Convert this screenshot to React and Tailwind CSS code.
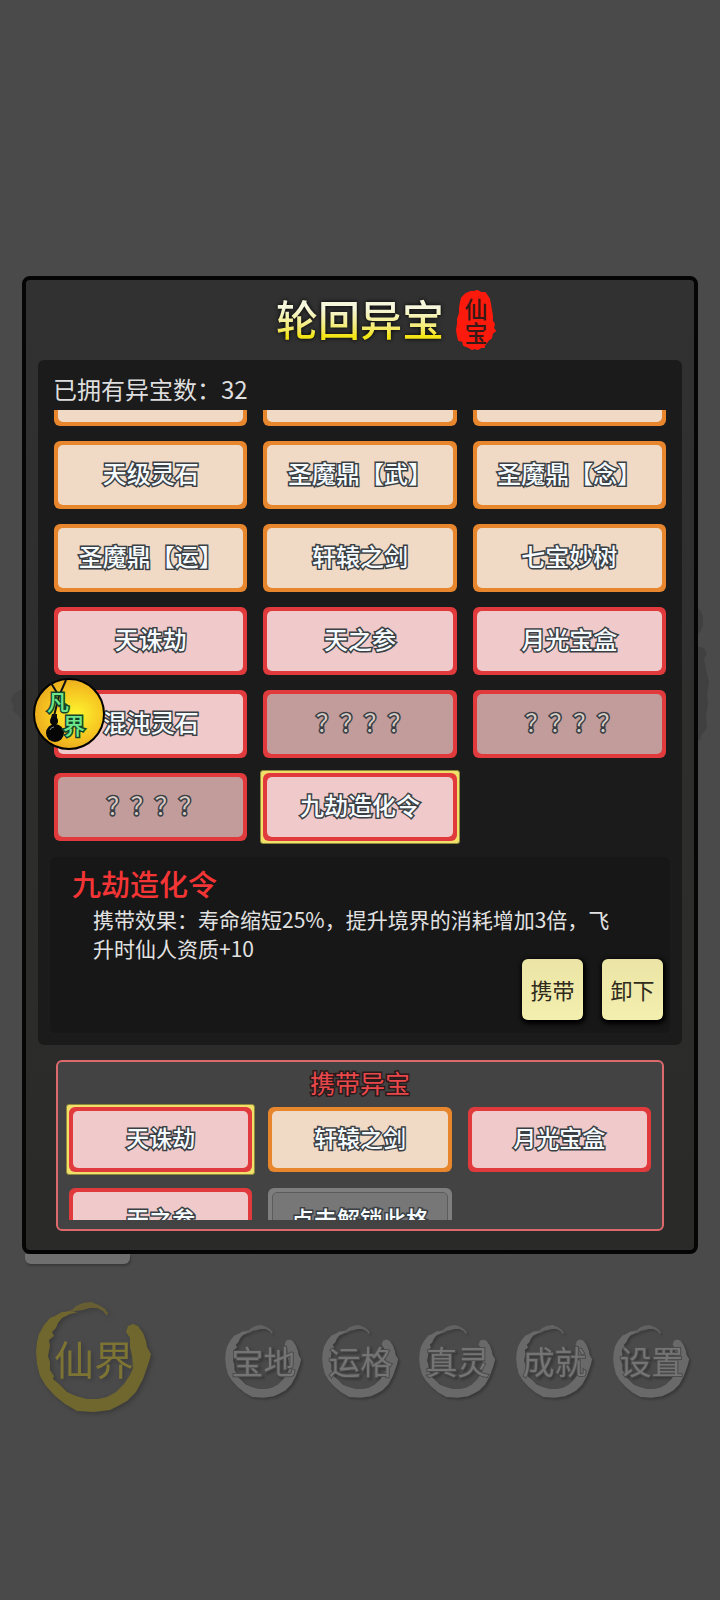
import React, { useState } from 'react'
import clsx from 'clsx'

// the first row is scrolled out of view, only its lower edge shows
const TREASURES = [
  { name: '', tone: 'orange' },
  { name: '', tone: 'orange' },
  { name: '', tone: 'orange' },
  { name: '天级灵石', tone: 'orange' },
  { name: '圣魔鼎【武】', tone: 'orange' },
  { name: '圣魔鼎【念】', tone: 'orange' },
  { name: '圣魔鼎【运】', tone: 'orange' },
  { name: '轩辕之剑', tone: 'orange' },
  { name: '七宝妙树', tone: 'orange' },
  { name: '天诛劫', tone: 'red' },
  { name: '天之参', tone: 'red' },
  { name: '月光宝盒', tone: 'red' },
  { name: '混沌灵石', tone: 'red' },
  { name: '？？？？', tone: 'locked' },
  { name: '？？？？', tone: 'locked' },
  { name: '？？？？', tone: 'locked' },
  { name: '九劫造化令', tone: 'red' },
]

const CARRIED = [
  { name: '天诛劫', tone: 'red' },
  { name: '轩辕之剑', tone: 'orange' },
  { name: '月光宝盒', tone: 'red' },
  { name: '天之参', tone: 'red' },
  { name: '点击解锁此格', tone: 'empty' },
]

const FRAME = {
  orange: 'bg-[#e8862d]',
  red: 'bg-[#e03a3c]',
  locked: 'bg-[#e03a3c]',
  empty: 'bg-[#7e7e7e]',
}

const FILL = {
  orange: 'bg-[#f0d9c5] font-medium text-[#f6fbff]',
  red: 'bg-[#f0caca] font-medium text-[#f6fbff]',
  locked: 'bg-[#c19c9a] pl-2 font-normal text-[#d9cdc8]',
  empty: 'bg-[#777777] border border-[#5c5c5c] font-medium text-[#f6fbff]',
}

function Tile({ item, selected, small, onClick }) {
  return (
    <div className="relative">
      {selected && <span className="absolute -inset-[3px] rounded-[3px] border border-[#8f8a3c] bg-[#f0e06a]" />}
      <button
        onClick={onClick}
        className={clsx('relative block w-full rounded-md p-1', small ? 'h-[65px]' : 'h-[68px]', FRAME[item.tone])}
      >
        <span
          className={clsx(
            'flex h-full items-center justify-center rounded-[5px] pb-1 whitespace-nowrap',
            '[-webkit-text-stroke:3px_#3a3f44] [paint-order:stroke_fill]',
            small ? 'text-[23px]' : 'text-2xl',
            FILL[item.tone]
          )}
        >
          {item.name}
        </span>
      </button>
    </div>
  )
}

function BrushRing({ className }) {
  return (
    <svg viewBox="0 0 116 112" className={className} fill="currentColor" aria-hidden="true">
      <path d="M92 24 L97 22 L102 24 L107 31 L110 39 L111 45 L115 52 L113 60 L107 77 L100 90 L91 99 L82 104 L74 108 L58 110 L41 109 L29 102 L19 94 L10 84 L4 74 L1 62 L0 50 L1 40 L3 32 L8 23 L14 16 L19 14 L26 10 L33 10 L42 10 L34 12 L26 16 L22 21 L20 26 L16 30 L18 34 L13 38 L14 44 L12 54 L14 60 L14 68 L18 74 L17 77 L23 82 L31 90 L40 94 L51 97 L62 97 L71 95 L80 90 L88 82 L94 73 L97 66 L96 54 L94 45 L94 36 L90 30 Z" />
      <path d="M24 11 L36 8 L40 4 L47 1 L55 0 L63 3 L69 7 L72 11 L71 14 L67 9 L61 6 L54 6 L47 8 L40 9 L30 12 Z" opacity="0.8" />
    </svg>
  )
}

function Seal() {
  return (
    <span className="absolute top-1/2 left-full ml-3 flex h-[60px] w-10 -translate-y-1/2 flex-col items-center justify-center">
      <svg viewBox="0 0 40 60" className="absolute inset-0 h-full w-full" aria-hidden="true">
        <path
          fill="#fb1a0c"
          stroke="#fb1a0c"
          strokeWidth="2"
          strokeLinejoin="round"
          d="M10 4 L15 2 L18 2 L21 1 L25 3 L29 3 L31 6 L33 9 L34 14 L35 20 L36 26 L36 31 L38 34 L37 38 L39 41 L36 43 L35 48 L32 50 L30 53 L28 55 L28 57 L25 57 L22 59 L19 58 L16 59 L13 57 L8 55 L7 51 L3 50 L2 46 L1 40 L2 34 L2 29 L4 23 L4 18 L5 12 L6 8 Z"
        />
      </svg>
      <span className="relative text-[23px] leading-6 font-medium text-[#351a18]">仙</span>
      <span className="relative text-[23px] leading-6 font-medium text-[#351a18]">宝</span>
    </span>
  )
}

function RealmBadge() {
  return (
    <button className="absolute top-[398px] left-[7px] h-[72px] w-[72px] rounded-full border-2 border-black bg-radial-[at_60%_50%] from-[#fdf02e] from-5% via-[#f6c421] via-50% to-[#df921a] text-[22px] font-medium text-[#6fe58c]">
      <svg viewBox="0 0 68 68" className="absolute inset-0 h-full w-full" aria-hidden="true">
        <path d="M16 3 L24 16 M31 0 L24 16 L19 36" stroke="#111" strokeWidth="2" fill="none" />
        <path d="M17 34 h5 v4 h-1 v8 h-4 v-8 h-1 Z" fill="#111" />
        <circle cx="19" cy="41" r="4" fill="#060606" />
        <circle cx="20" cy="53" r="9" fill="#060606" />
        <path d="M15 50 q1 -3 4 -3" stroke="#888" strokeWidth="1" fill="none" />
      </svg>
      <span className="absolute top-2 left-3 leading-6 [-webkit-text-stroke:3px_#12452a] [paint-order:stroke_fill]">凡</span>
      <span className="absolute top-8 left-7 leading-6 [-webkit-text-stroke:3px_#12452a] [paint-order:stroke_fill]">界</span>
    </button>
  )
}

export default function App() {
  const [picked, setPicked] = useState(16)
  const [slot, setSlot] = useState(0)

  return (
    <div className="relative min-h-screen overflow-hidden bg-[#4a4a4a] pt-[276px] font-['Noto_Sans_CJK_SC',sans-serif]">
      {/* ink smudges showing at both sides of the dialog */}
      <svg viewBox="0 0 20 60" className="absolute top-[680px] left-2 h-[60px] w-5 text-[#434343]" fill="currentColor" aria-hidden="true">
        <path d="M20 6 L12 10 L5 14 L3 20 L6 27 L4 30 L10 35 L13 40 L20 44 Z" />
      </svg>
      <svg viewBox="0 0 20 140" className="absolute top-[604px] right-1 h-[140px] w-5 text-[#404040]" fill="currentColor" aria-hidden="true">
        <path d="M0 2 L4 6 L7 12 L7 22 L4 28 L0 32 Z M0 42 L8 44 L11 50 L8 54 L10 66 L13 78 L11 90 L12 100 L10 112 L11 124 L6 130 L4 136 L0 137 Z" />
      </svg>

      <main className="relative mx-[22px] rounded-lg border-4 border-[#050505] bg-linear-to-b from-[#313131] to-[#2a2a29] pb-[19px]">
        <header className="flex h-[80px] items-center justify-center">
          <div className="relative">
            <h1 className="bg-linear-to-b from-[#f6f6dc] from-30% to-[#f4e516] to-75% bg-clip-text pb-1 text-[42px] leading-[56px] font-medium text-transparent drop-shadow-[0_0_2px_#000000]">
              轮回异宝
            </h1>
            <Seal />
          </div>
        </header>

        <section className="mx-3 rounded-md bg-[#1b1b1b] pb-3">
          <p className="flex h-[50px] items-center px-[15px] pt-2 text-2xl text-[#dedede]">已拥有异宝数：32</p>

          <div className="overflow-hidden px-4 pb-4">
            <div className="-mt-[52px] grid grid-cols-3 gap-x-4 gap-y-[15px]">
              {TREASURES.map((t, i) => (
                <Tile key={i} item={t} selected={picked === i} onClick={() => setPicked(i)} />
              ))}
            </div>
          </div>

          <div className="mx-3 rounded-md bg-[#171717] pt-3 pb-[13px]">
            <h2 className="pl-[22px] text-[29px] leading-7 font-medium text-[#f43535]">九劫造化令</h2>
            <p className="mt-2 pr-[50px] pl-[43px] text-[21px] leading-[29px] text-[#e2e2e2]">
              携带效果：寿命缩短25%，提升境界的消耗增加3倍，飞升时仙人资质+10
            </p>
            <div className="-mt-1 flex justify-end gap-[19px] pr-[7px]">
              {['携带', '卸下'].map(label => (
                <button
                  key={label}
                  className="h-[61px] w-[61px] rounded-md bg-linear-to-b from-[#ebe4a6] to-[#f3efae] text-[22px] text-[#2f2b1c] shadow-[1px_2px_4px_2px_#000000]"
                >
                  {label}
                </button>
              ))}
            </div>
          </div>
        </section>

        <section className="mx-[30px] mt-[15px] rounded-md border-2 border-[#dc6a6c] bg-[#434343] pb-[9px]">
          <h2 className="flex h-[41px] items-center justify-center text-[25px] text-[#e8484c] [-webkit-text-stroke:3px_#2a1a1a] [paint-order:stroke_fill]">
            携带异宝
          </h2>
          <div className="mx-[7px] h-[117px] overflow-hidden p-1">
            <div className="grid grid-cols-3 gap-4">
              {CARRIED.map((t, i) => (
                <Tile key={t.name} item={t} small selected={slot === i} onClick={() => setSlot(i)} />
              ))}
            </div>
          </div>
        </section>

        <RealmBadge />
      </main>

      <div className="ml-[25px] h-[10px] w-[105px] rounded-b-md bg-[#6f6f6f] shadow-[1px_2px_2px_#3a3a3a]" />

      <nav className="mt-[38px] flex items-center justify-between pr-[30px] pl-9">
        <button className="relative h-[112px] w-[116px] text-[#70672f] drop-shadow-[2px_2px_2px_#3a3a3a]">
          <BrushRing className="absolute inset-0 h-full w-full" />
          <span className="relative text-[40px] leading-[60px] text-[#7d7434]">仙界</span>
        </button>
        <div className="flex gap-5 pt-2">
          {['宝地', '运格', '真灵', '成就', '设置'].map(label => (
            <button key={label} className="relative h-[74px] w-[77px] pb-1 text-[#696969] drop-shadow-[2px_2px_1px_#393939]">
              <BrushRing className="absolute inset-0 h-full w-full" />
              <span className="relative text-[32px] leading-[50px] text-[#747474] [-webkit-text-stroke:2px_#4c4c4c] [paint-order:stroke_fill]">
                {label}
              </span>
            </button>
          ))}
        </div>
      </nav>
    </div>
  )
}
